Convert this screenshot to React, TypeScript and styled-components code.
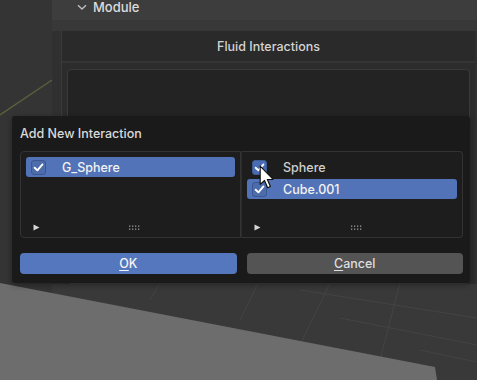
import React from 'react';
import styled, { createGlobalStyle } from 'styled-components';

const GlobalStyle = createGlobalStyle`
  html, body {
    margin: 0;
    padding: 0;
    background: #393939;
  }
  body {
    font-family: Inter, "DejaVu Sans", sans-serif;
    -webkit-font-smoothing: antialiased;
  }
`;

type Item = { name: string; checked: boolean; selected: boolean };

const leftItems: Item[] = [{ name: 'G_Sphere', checked: true, selected: true }];
const rightItems: Item[] = [
  { name: 'Sphere', checked: true, selected: false },
  { name: 'Cube.001', checked: true, selected: true },
];

function ViewportBackdrop() {
  return (
    <Backdrop viewBox="0 0 477 380" width="477" height="380">
      <rect x="0" y="0" width="477" height="380" fill="#393939" />
      <rect x="0" y="0" width="52" height="380" fill="#343434" />
      <line x1="0" y1="115" x2="52" y2="80" stroke="#5b5f3b" strokeWidth="1.5" />
      <g stroke="#444" strokeWidth="1">
        <line x1="160" y1="283" x2="150" y2="300" />
        <line x1="258" y1="283" x2="240" y2="320" />
        <line x1="330" y1="283" x2="300" y2="345" />
        <line x1="400" y1="283" x2="380" y2="360" />
        <line x1="300" y1="290" x2="477" y2="318" />
        <line x1="340" y1="318" x2="477" y2="345" />
        <line x1="420" y1="350" x2="477" y2="362" />
      </g>
      <polygon points="0,283 435,367 437,380 0,380" fill="#6d6d6d" />
    </Backdrop>
  );
}

function Check() {
  return (
    <svg width="11" height="11" viewBox="0 0 10 10">
      <path d="M1.5 5.2 L4 7.6 L8.6 2.2" fill="none" stroke="#fff" strokeWidth="1.7" strokeLinecap="round" strokeLinejoin="round" />
    </svg>
  );
}

function Grip() {
  return (
    <svg width="12" height="5" viewBox="0 0 12 5">
      {[0, 3, 6, 9].map((x) =>
        [0, 3].map((y) => <rect key={`${x}-${y}`} x={x + 1} y={y + 0.5} width="1.3" height="1.3" fill="#9a9a9a" />)
      )}
    </svg>
  );
}

function Triangle() {
  return (
    <svg width="7" height="7" viewBox="0 0 7 7">
      <path d="M0.5 0.5 L6.5 3.5 L0.5 6.5 Z" fill="#d6d6d6" />
    </svg>
  );
}

function Cursor() {
  return (
    <CursorIcon width="16" height="25" viewBox="0 0 14 22">
      <path
        d="M1 1 L1 17 L4.8 13.6 L7.6 20 L10 19 L7.3 12.8 L12.4 12.6 Z"
        fill="#fff"
        stroke="#111"
        strokeWidth="1"
        strokeLinejoin="round"
      />
    </CursorIcon>
  );
}

function ListBox({ items, side }: { items: Item[]; side: 'left' | 'right' }) {
  return (
    <List side={side}>
      <Rows>
        {items.map((it) => (
          <Row key={it.name} selected={it.selected}>
            <CheckBox selected={it.selected}>{it.checked && <Check />}</CheckBox>
            <RowLabel selected={it.selected}>{it.name}</RowLabel>
          </Row>
        ))}
      </Rows>
      <ListFooter>
        <Triangle />
        <Grip />
        <span />
      </ListFooter>
    </List>
  );
}

export default function App() {
  return (
    <>
      <GlobalStyle />
      <Screen>
        <ViewportBackdrop />
        <Gutter />
        <Properties>
          <SubHeader>
            <svg width="10" height="7" viewBox="0 0 10 7">
              <path d="M1 1.2 L5 5 L9 1.2" fill="none" stroke="#bdbdbd" strokeWidth="1.4" />
            </svg>
            <span>Module</span>
          </SubHeader>
          <Spacer />
          <Box>
            <BoxHeader>Fluid Interactions</BoxHeader>
            <BoxBody>
              <InnerList />
            </BoxBody>
          </Box>
        </Properties>

        <Popup>
          <PopupTitle>Add New Interaction</PopupTitle>
          <Lists>
            <ListBox items={leftItems} side="left" />
            <ListBox items={rightItems} side="right" />
          </Lists>
          <Buttons>
            <DialogButton primary>
              <u>O</u>K
            </DialogButton>
            <DialogButton>
              <u>C</u>ancel
            </DialogButton>
          </Buttons>
        </Popup>
        <Cursor />
      </Screen>
    </>
  );
}

const Screen = styled.div`
  position: relative;
  width: 477px;
  height: 380px;
  overflow: hidden;
  display: flex;
  align-items: flex-start;
`;

const Backdrop = styled.svg`
  position: absolute;
  left: 0;
  top: 0;
`;

const Gutter = styled.div`
  width: 52px;
  flex-shrink: 0;
`;

const Properties = styled.div`
  position: relative;
  flex: 1;
  height: 284px;
  background: #303030;
  display: flex;
  flex-direction: column;
`;

const SubHeader = styled.div`
  height: 20px;
  box-sizing: border-box;
  background: #3d3d3d;
  display: flex;
  align-items: center;
  align-content: flex-start;
  gap: 6px;
  padding: 0 0 6px 25px;
  color: #dcdcdc;
  font-size: 13px;
  font-weight: 500;
  line-height: 14px;
  svg {
    margin-top: 1px;
  }
`;

const Spacer = styled.div`
  height: 11px;
  background: #383838;
`;

const Box = styled.div`
  flex: 1;
  margin-left: 9px;
  margin-right: 2px;
  background: #2c2c2c;
  border-left: 1px solid #3a3a3a;
  display: flex;
  flex-direction: column;
`;

const BoxHeader = styled.div`
  height: 30px;
  background: #2a2a2a;
  border-bottom: 2px solid #353535;
  display: flex;
  align-items: center;
  justify-content: center;
  color: #d4d4d4;
  font-size: 12.5px;
  font-weight: 500;
`;

const BoxBody = styled.div`
  flex: 1;
  padding: 6px 5px 0 5px;
  display: flex;
`;

const InnerList = styled.div`
  flex: 1;
  background: #232323;
  border: 1px solid #3a3a3a;
  border-radius: 4px;
`;

const Popup = styled.div`
  position: absolute;
  left: 12px;
  top: 116px;
  width: 458px;
  height: 167px;
  box-sizing: border-box;
  background: #1a1a1a;
  border-radius: 3px;
  padding: 10px 7px 0 8px;
  display: flex;
  flex-direction: column;
  box-shadow: 0 2px 6px rgba(0, 0, 0, 0.35);
`;

const PopupTitle = styled.div`
  color: #dadada;
  font-size: 12.5px;
  font-weight: 500;
  height: 16px;
  line-height: 16px;
  margin-bottom: 9px;
`;

const Lists = styled.div`
  display: grid;
  grid-template-columns: 221px 1fr;
  height: 87px;
`;

const List = styled.div<{ side: 'left' | 'right' }>`
  background: #1d1d1d;
  border: 1px solid #333;
  border-radius: ${({ side }) => (side === 'left' ? '4px 0 0 4px' : '0 4px 4px 0')};
  ${({ side }) => (side === 'right' ? 'border-left: 1px solid #2c2c2c;' : '')}
  display: flex;
  flex-direction: column;
  padding: 5px 5px 0 5px;
`;

const Rows = styled.div`
  flex: 1;
  display: flex;
  flex-direction: column;
  gap: 2px;
`;

const Row = styled.div<{ selected: boolean }>`
  height: 20px;
  border-radius: 3px;
  background: ${({ selected }) => (selected ? '#5273b7' : 'transparent')};
  display: flex;
  align-items: center;
  padding-left: 5px;
`;

const CheckBox = styled.div<{ selected: boolean }>`
  width: 15px;
  height: 15px;
  box-sizing: border-box;
  border-radius: 3px;
  background: ${({ selected }) => (selected ? '#4d6cac' : '#4a6cb2')};
  border: 1px solid ${({ selected }) => (selected ? '#3b5790' : '#3d5a94')};
  display: flex;
  align-items: center;
  justify-content: center;
`;

const RowLabel = styled.span<{ selected: boolean }>`
  margin-left: 16px;
  color: ${({ selected }) => (selected ? '#f2f2f2' : '#cfcfcf')};
  font-size: 12.5px;
  font-weight: 500;
`;

const ListFooter = styled.div`
  height: 20px;
  display: grid;
  grid-template-columns: 1fr auto 1fr;
  align-items: center;
  padding-left: 7px;
  svg:first-child {
    justify-self: start;
  }
`;

const Buttons = styled.div`
  margin-top: 15px;
  display: grid;
  grid-template-columns: 1fr 1fr;
  gap: 10px;
`;

const DialogButton = styled.div<{ primary?: boolean }>`
  height: 21px;
  border-radius: 4px;
  background: ${({ primary }) => (primary ? '#5577bd' : '#545454')};
  color: ${({ primary }) => (primary ? '#f4f4f4' : '#dedede')};
  font-size: 12.5px;
  font-weight: 500;
  display: flex;
  align-items: center;
  justify-content: center;
  u {
    text-decoration-thickness: 1px;
    text-underline-offset: 2px;
  }
`;

const CursorIcon = styled.svg`
  position: absolute;
  left: 259px;
  top: 165px;
`;
